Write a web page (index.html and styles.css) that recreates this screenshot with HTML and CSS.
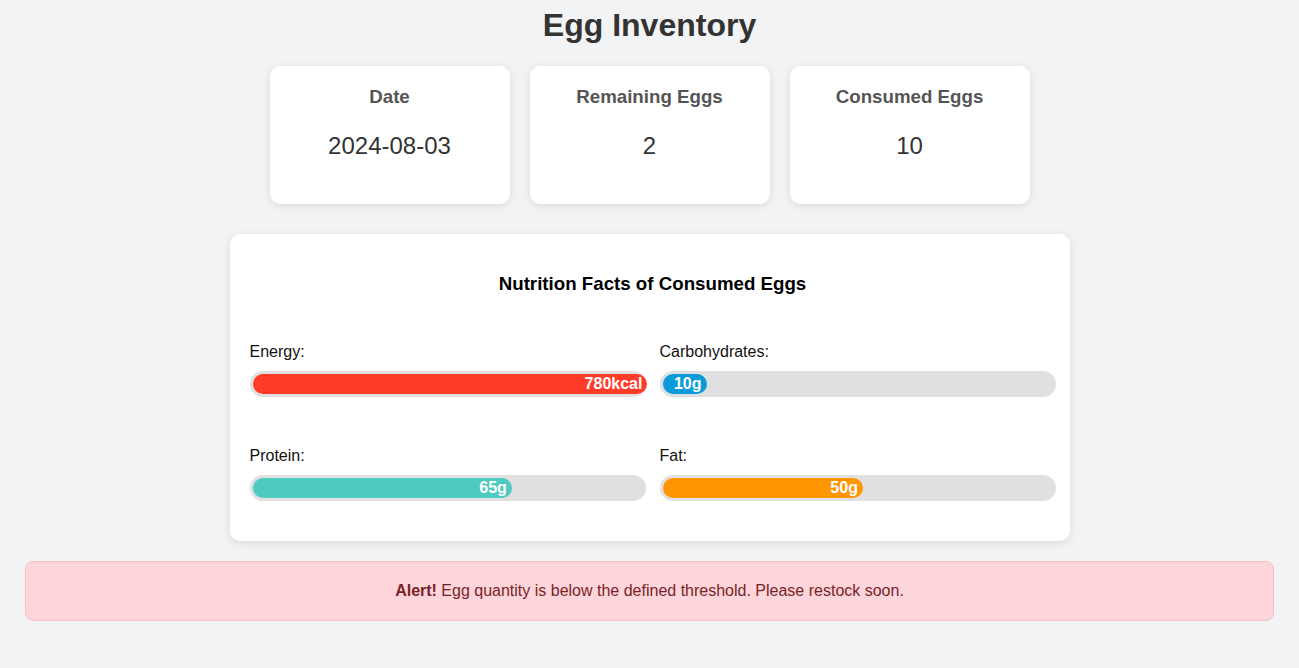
FILE: index.html
```html
<!DOCTYPE html>
<html lang="en">
  <head>
    <meta charset="UTF-8" />
    <title>Egg Inventory</title>
    <link rel="stylesheet" href="styles.css">
  </head>
  <body>
    <main class="inventory">
      <h1 class="inventory-title">Egg Inventory</h1>

      <div class="stats">
        <div class="stat-card">
          <h3>Date</h3>
          <p>2024-08-03</p>
        </div>
        <div class="stat-card">
          <h3>Remaining Eggs</h3>
          <p>2</p>
        </div>
        <div class="stat-card">
          <h3>Consumed Eggs</h3>
          <p>10</p>
        </div>
      </div>

      <section class="nutrition">
        <h3 class="nutrition-title">Nutrition Facts of Consumed Eggs</h3>
        <div class="nutrition-grid">
          <div class="nutrient">
            <div class="nutrient-label">Energy:</div>
            <div class="bar"><div class="bar-fill energy" style="width: 100.5%">780kcal</div></div>
          </div>
          <div class="nutrient">
            <div class="nutrient-label">Carbohydrates:</div>
            <div class="bar"><div class="bar-fill carbs" style="width: 10%">10g</div></div>
          </div>
          <div class="nutrient">
            <div class="nutrient-label">Protein:</div>
            <div class="bar"><div class="bar-fill protein" style="width: 66%">65g</div></div>
          </div>
          <div class="nutrient">
            <div class="nutrient-label">Fat:</div>
            <div class="bar"><div class="bar-fill fat" style="width: 51%">50g</div></div>
          </div>
        </div>
      </section>

      <div class="alert">
        <strong>Alert!</strong> Egg quantity is below the defined threshold. Please restock soon.
      </div>
    </main>
  </body>
</html>
```

FILE: styles.css
```css
body {
  margin: 0;
  background-color: #f2f3f5;
  font-family: "Liberation Sans", Arial, sans-serif;
  color: #333;
}

.inventory {
  padding-top: 7px;
}

.inventory-title {
  margin: 0;
  text-align: center;
  font-size: 32px;
  color: #333;
}

.stats {
  display: flex;
  justify-content: center;
  gap: 20px;
  margin-top: 22px;
}

.stat-card {
  width: 240px;
  box-sizing: border-box;
  padding: 20px;
  background-color: #fff;
  border-radius: 10px;
  box-shadow: 0 2px 8px rgba(0, 0, 0, 0.1);
  text-align: center;
}

.stat-card h3 {
  margin: 0;
  font-size: 18.72px;
  color: #555;
}

.stat-card p {
  margin: 24px 0;
  font-size: 24px;
  color: #333;
}

.nutrition {
  width: 840px;
  box-sizing: border-box;
  margin: 30px auto 0;
  padding: 20px 14px 40px 20px;
  background-color: #fff;
  border-radius: 10px;
  box-shadow: 0 2px 8px rgba(0, 0, 0, 0.1);
}

.nutrition-title {
  margin: 19px 0 48px;
  text-align: center;
  font-size: 18.72px;
  color: #000;
}

.nutrition-grid {
  display: grid;
  grid-template-columns: 396px 396px;
  column-gap: 14px;
  row-gap: 50px;
}

.nutrient-label {
  margin-bottom: 10px;
  font-size: 16px;
  color: #111;
}

.bar {
  height: 26px;
  box-sizing: border-box;
  padding: 3px 0 3px 3px;
  background-color: #e0e0e0;
  border-radius: 13px;
}

.bar-fill {
  height: 20px;
  min-width: 44px;
  box-sizing: border-box;
  padding-right: 5px;
  border-radius: 10px;
  color: #fff;
  font-size: 16px;
  font-weight: bold;
  line-height: 20px;
  text-align: right;
}

.energy {
  background-color: #ff3b29;
}

.carbs {
  background-color: #0b9bdb;
}

.protein {
  background-color: #4ecac1;
}

.fat {
  background-color: #ff9500;
}

.alert {
  margin: 20px 25px 0 25px;
  padding: 20px;
  background-color: #fdd5da;
  border: 1px solid #f9c0c7;
  border-radius: 8px;
  color: #7a1f27;
  font-size: 16px;
  text-align: center;
}
```
